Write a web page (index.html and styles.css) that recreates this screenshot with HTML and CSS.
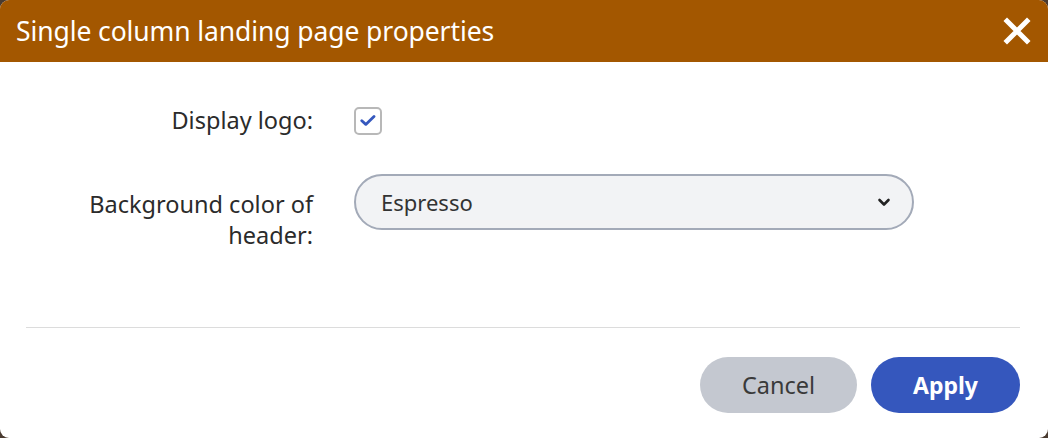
FILE: index.html
```html
<!DOCTYPE html>
<html>
<head>
<meta charset="utf-8">
<link rel="stylesheet" href="styles.css">
</head>
<body>
<div class="dialog">
  <div class="header">
    <span class="title">Single column landing page properties</span>
    <button class="close" aria-label="Close">
      <svg width="28" height="28" viewBox="0 0 28 28"><path d="M4 4 L24 24 M24 4 L4 24" stroke="#fff" stroke-width="5" stroke-linecap="square"/></svg>
    </button>
  </div>
  <div class="body">
    <div class="form">
      <label class="label row1">Display logo:</label>
      <div class="control row1">
        <span class="checkbox">
          <svg width="16" height="13" viewBox="0 0 16 13"><path d="M1.8 6.8 L5.8 10.4 L14 2.4" fill="none" stroke="#3558be" stroke-width="2.8" stroke-linecap="round" stroke-linejoin="round"/></svg>
        </span>
      </div>
      <label class="label row2">Background color of header:</label>
      <div class="control row2">
        <div class="select">
          <span>Espresso</span>
          <svg width="14" height="10" viewBox="0 0 14 10"><path d="M2.5 3 L7 7.5 L11.5 3" fill="none" stroke="#222" stroke-width="2.6" stroke-linecap="round" stroke-linejoin="round"/></svg>
        </div>
      </div>
    </div>
    <div class="divider"></div>
    <div class="footer">
      <button class="btn cancel">Cancel</button>
      <button class="btn apply">Apply</button>
    </div>
  </div>
</div>
</body>
</html>
```
FILE: styles.css
```css
html, body {
  margin: 0;
  padding: 0;
  width: 1048px;
  height: 438px;
  overflow: hidden;
  background: #4a3b30;
  font-family: "Noto Sans", "Open Sans", sans-serif;
}
.dialog {
  width: 1048px;
  height: 438px;
  background: #fff;
  border-radius: 9px;
  overflow: hidden;
  display: flex;
  flex-direction: column;
}
.header {
  height: 62px;
  background: #a35700;
  display: flex;
  align-items: center;
  justify-content: space-between;
  padding: 0 17px 0 16px;
  box-sizing: border-box;
}
.title {
  color: #fff;
  font-size: 26.5px;
  letter-spacing: -0.1px;
}
.close {
  background: none;
  border: 0;
  padding: 0;
  width: 28px;
  height: 28px;
  display: flex;
  cursor: pointer;
}
.body {
  padding: 43px 28px 0 26px;
  display: flex;
  flex-direction: column;
}
.form {
  display: grid;
  grid-template-columns: 287px 560px;
  column-gap: 41px;
  row-gap: 38px;
}
.label {
  text-align: right;
  color: #2b2b2b;
  font-size: 23.5px;
  line-height: 31px;
}
.row1.control {
  display: flex;
  align-items: center;
}
.row2.label {
  padding-top: 15px;
}
.checkbox {
  width: 24px;
  height: 24px;
  border: 2px solid #b8b8b8;
  border-radius: 5px;
  display: flex;
  align-items: center;
  justify-content: center;
  background: #fff;
}
.select {
  height: 56px;
  box-sizing: border-box;
  border: 2px solid #a3aab8;
  border-radius: 28px;
  background: #f2f3f5;
  display: flex;
  align-items: center;
  justify-content: space-between;
  padding: 0 21px 0 25px;
  color: #333;
  font-size: 22px;
}
.divider {
  height: 1px;
  background: #dcdcdc;
  margin-top: 76px;
}
.footer {
  display: flex;
  justify-content: flex-end;
  gap: 14px;
  margin-top: 29px;
}
.btn {
  height: 56px;
  border: 0;
  border-radius: 28px;
  font-family: "Noto Sans", "Open Sans", sans-serif;
  font-size: 23.5px;
  cursor: pointer;
}
.cancel {
  width: 157px;
  background: #c4c8d0;
  color: #3a3a3a;
}
.apply {
  width: 149px;
  background: #3557bd;
  color: #fff;
  font-weight: 700;
  font-size: 23px;
}
```
